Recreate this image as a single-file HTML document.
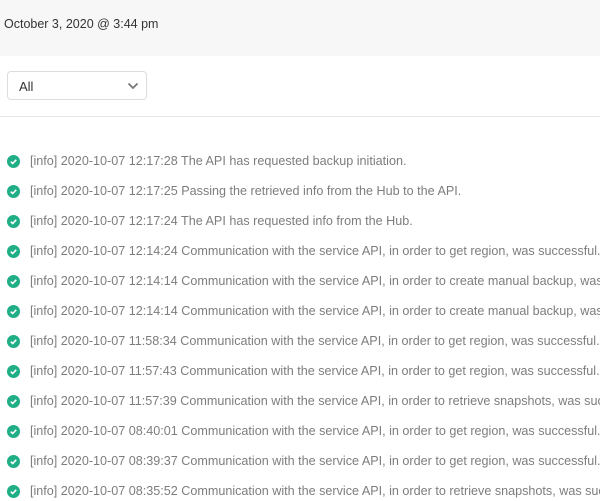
<!DOCTYPE html>
<html><head><style>
body{margin:0;width:600px;height:498px;overflow:hidden;background:#fff;font-family:"Liberation Sans",sans-serif;position:relative}
.top{position:absolute;left:0;top:0;width:600px;height:56px;background:#f7f7f7}
.date{position:absolute;left:4px;top:17px;font-size:12.5px;color:#333}
.sel{position:absolute;left:7px;top:71px;width:140px;height:29px;border:1px solid #ddd;border-radius:4px;box-sizing:border-box}
.sel span{position:absolute;left:11px;top:7px;font-size:13px;color:#333}
.sel svg{position:absolute;left:119px;top:10px}
.hr{position:absolute;left:0;top:116px;width:600px;height:1px;background:#e6e6e6}
.row{position:absolute;left:0;height:20px;white-space:nowrap}
.row svg{position:absolute;left:7px;top:4px}
.row span{position:absolute;left:30px;top:3px;font-size:12.6px;color:#7d7d7d}
</style></head><body>
<div class="top"></div>
<div class="date">October 3, 2020 @ 3:44 pm</div>
<div class="sel"><span>All</span><svg width="12" height="8" viewBox="0 0 12 8"><path d="M1.5 1.5 L6 6 L10.5 1.5" fill="none" stroke="#777" stroke-width="1.8"/></svg></div>
<div class="hr"></div>
<div id="rows"></div>
<script>
const t=["12:17:28 The API has requested backup initiation.","12:17:25 Passing the retrieved info from the Hub to the API.","12:17:24 The API has requested info from the Hub.","12:14:24 Communication with the service API, in order to get region, was successful.","12:14:14 Communication with the service API, in order to create manual backup, was successful.","12:14:14 Communication with the service API, in order to create manual backup, was successful.","11:58:34 Communication with the service API, in order to get region, was successful.","11:57:43 Communication with the service API, in order to get region, was successful.","11:57:39 Communication with the service API, in order to retrieve snapshots, was successful.","08:40:01 Communication with the service API, in order to get region, was successful.","08:39:37 Communication with the service API, in order to get region, was successful.","08:35:52 Communication with the service API, in order to retrieve snapshots, was successful."];
let h="";t.forEach((s,i)=>{h+=`<div class="row" style="top:${151+i*30}px"><svg width="13" height="13" viewBox="0 0 13 13"><circle cx="6.5" cy="6.5" r="6.5" fill="#1fae86"/><path d="M3.8 6.7 L5.7 8.5 L9.2 4.8" fill="none" stroke="#fff" stroke-width="1.6"/></svg><span>[info] 2020-10-07 ${s}</span></div>`});
document.getElementById("rows").innerHTML=h;
</script>
</body></html>
